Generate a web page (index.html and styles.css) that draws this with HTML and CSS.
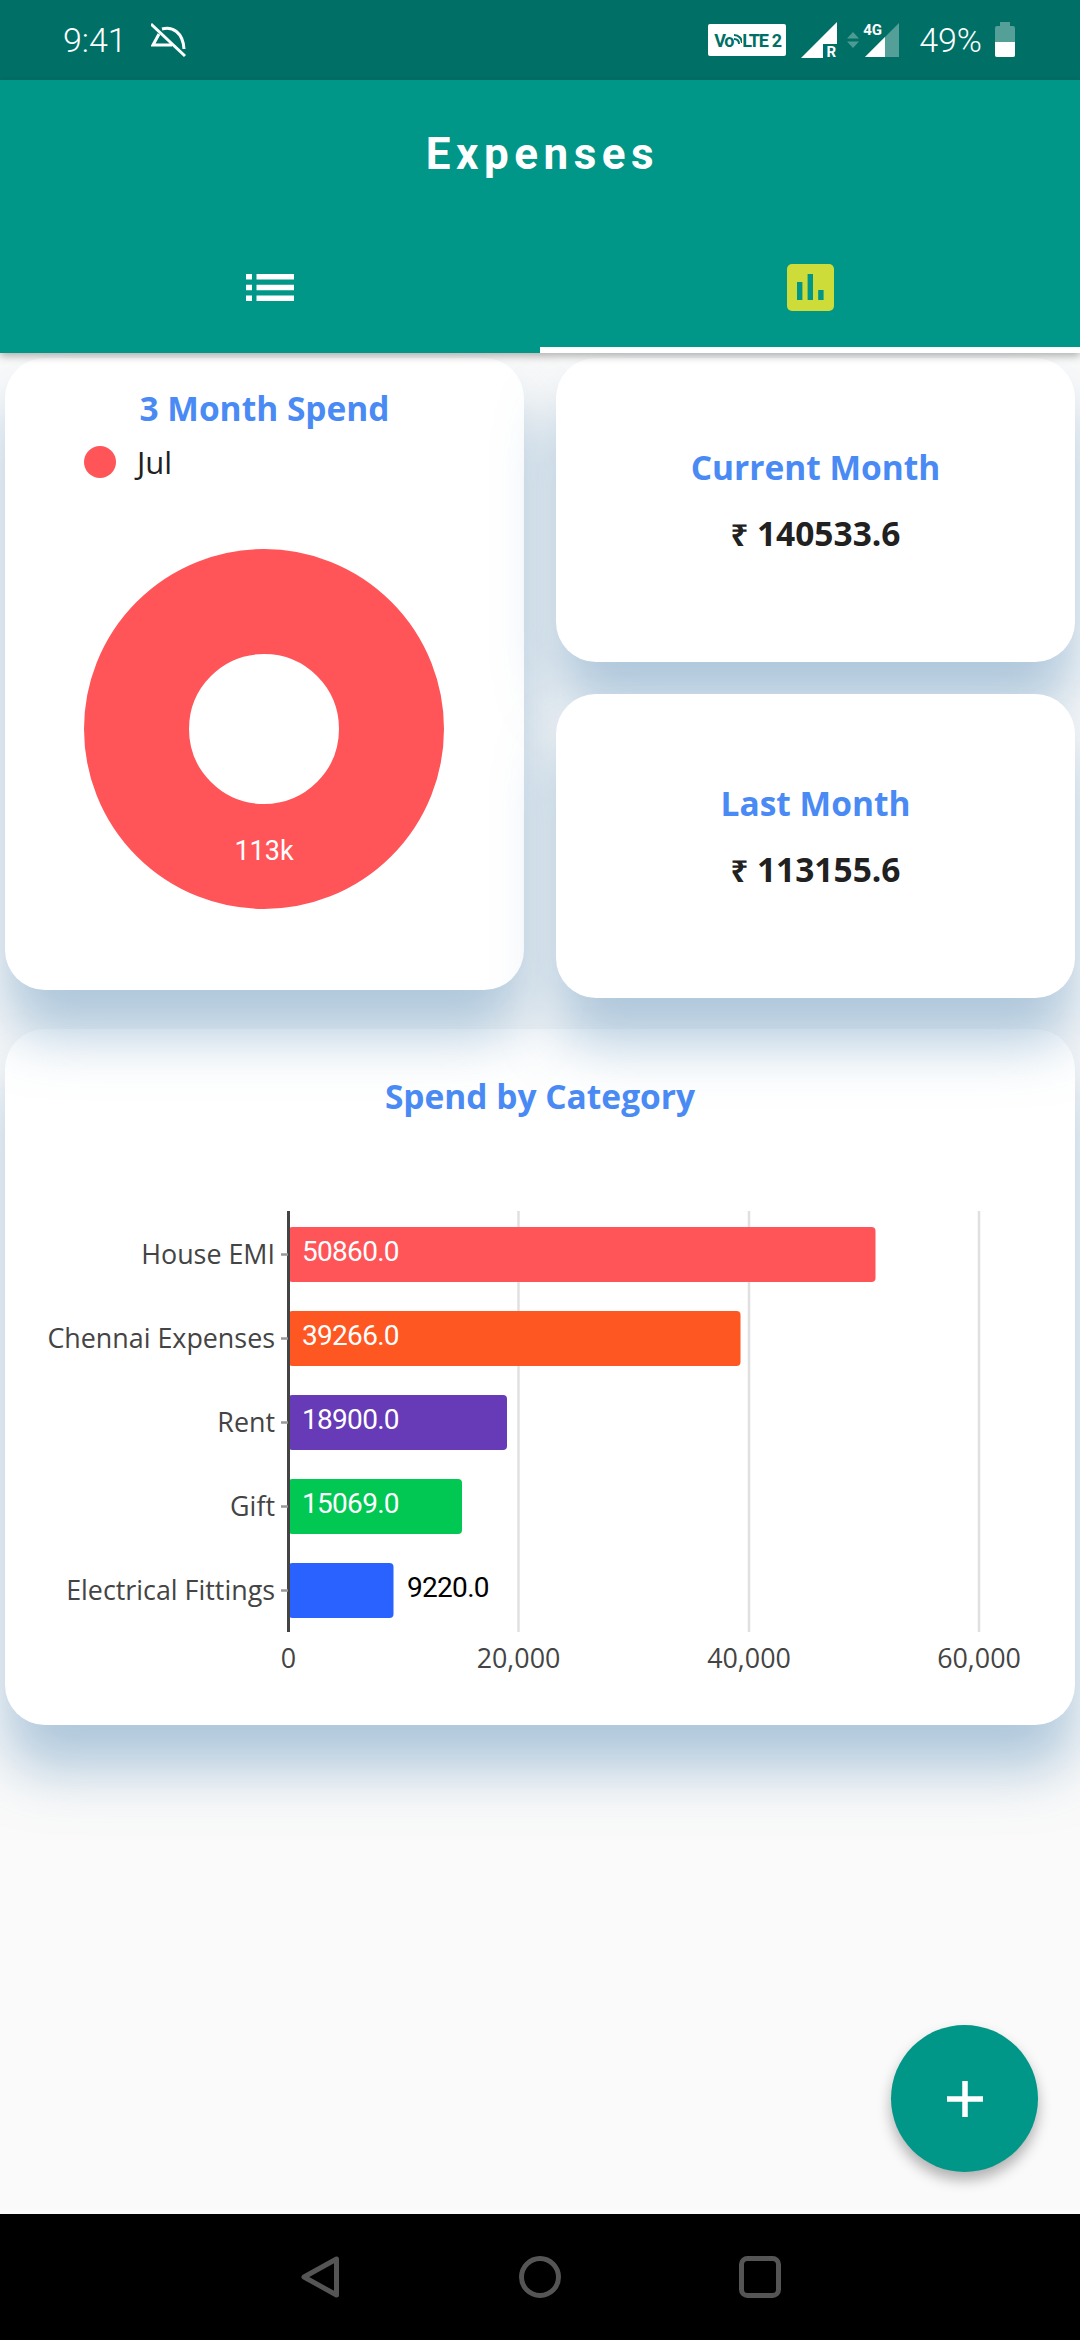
FILE: index.html
```html
<!DOCTYPE html>
<html lang="en">
<head>
<meta charset="UTF-8" />
<title>Expenses</title>
<link rel="stylesheet" href="styles.css">
</head>
<body>

<div class="statusbar">
	<div class="status-left">
		<span class="clock">9:41</span>
		<svg class="bell-off" width="36" height="36" viewBox="0 0 36 36">
			<path d="M21 23 L2 23 L8 12 M11 7 C21 4 32 10 33 27" fill="none" stroke="#fff" stroke-width="3"/>
			<path d="M0 2 L34 34" stroke="#fff" stroke-width="3"/>
		</svg>
	</div>
	<div class="status-right">
		<div class="volte">
			<span>Vo</span>
			<svg width="9" height="14" viewBox="0 0 9 14"><path d="M1 6 C4 6 6 8 6 11 M1 2 C6 2 9 6 9 10" fill="none" stroke="#007066" stroke-width="2"/></svg>
			<span>LTE</span>
			<span class="volte-sim">2</span>
		</div>
		<div class="signal">
			<svg width="36" height="36" viewBox="0 0 36 36"><path d="M0 36 L36 0 L36 22 L22 22 L22 36 Z" fill="#fff"/></svg>
			<span class="roam">R</span>
		</div>
		<svg class="updown" width="12" height="16" viewBox="0 0 12 16"><path d="M6 0 L12 6.500 L0 6.500 Z M0 9.500 L12 9.500 L6 16 Z" fill="#fff" opacity=".3"/></svg>
		<div class="signal signal-4g">
			<svg width="34" height="34" viewBox="0 0 34 34"><path d="M0 34 L34 0 L34 34 Z" fill="#fff" opacity=".33"/><path d="M0 34 L20 14 L20 34 Z" fill="#fff"/></svg>
			<span class="lte">4G</span>
		</div>
		<span class="percent">49%</span>
		<div class="battery"><div class="battery-fill"></div></div>
	</div>
</div>

<div class="appbar">
	<h1 class="apptitle">Expenses</h1>
	<div class="tabs">
		<div class="tab">
			<svg width="48" height="27" viewBox="0 0 48 27">
				<path d="M0 0h6v5.500h-6z M10.500 0h37.500v5.500h-37.500z M0 10.700h6v5.500h-6z M10.500 10.700h37.500v5.500h-37.500z M0 21.400h6v5.500h-6z M10.500 21.400h37.500v5.500h-37.500z" fill="#fff"/>
			</svg>
		</div>
		<div class="tab tab-active">
			<div class="chart-tile">
				<svg width="27" height="26" viewBox="0 0 27 26">
					<path d="M0 8h5.400v18h-5.400z M10.600 0h5.400v26h-5.400z M21.200 16h5.400v10h-5.400z" fill="#009688"/>
				</svg>
			</div>
		</div>
	</div>
</div>

<div class="content">
	<div class="cards-top">
		<div class="card card-donut">
			<h2 class="card-title">3 Month Spend</h2>
			<div class="legend"><span class="legend-dot"></span><span class="legend-label">Jul</span></div>
			<svg class="donut" width="360" height="360" viewBox="0 0 360 360">
				<circle cx="180" cy="180" r="127.500" fill="none" stroke="#ff5558" stroke-width="105"/>
				<text x="180" y="311" text-anchor="middle" class="donut-label">113k</text>
			</svg>
		</div>
		<div class="side-cards">
			<div class="card card-stat">
				<h2 class="card-title">Current Month</h2>
				<p class="stat-value"><span class="rupee">₹</span> 140533.6</p>
			</div>
			<div class="card card-stat">
				<h2 class="card-title">Last Month</h2>
				<p class="stat-value"><span class="rupee">₹</span> 113155.6</p>
			</div>
		</div>
	</div>

	<div class="card card-bars">
		<h2 class="card-title">Spend by Category</h2>
		<svg class="bars" width="1069" height="500" viewBox="0 0 1069 500">
			<g class="grid">
				<line x1="513.500" y1="0" x2="513.500" y2="421"/>
				<line x1="744" y1="0" x2="744" y2="421"/>
				<line x1="974" y1="0" x2="974" y2="421"/>
			</g>

			<rect class="bar" x="283.500" y="16" width="587" height="55" rx="4" fill="#ff5558"/>
			<rect class="bar" x="283.500" y="100" width="452" height="55" rx="4" fill="#ff5722"/>
			<rect class="bar" x="283.500" y="184" width="218.500" height="55" rx="4" fill="#673ab7"/>
			<rect class="bar" x="283.500" y="268" width="173.500" height="55" rx="4" fill="#00c853"/>
			<rect class="bar" x="283.500" y="352" width="105" height="55" rx="4" fill="#2962ff"/>

			<line class="axis" x1="283.500" y1="0" x2="283.500" y2="421"/>
			<g class="ticks">
				<line x1="276" y1="43.500" x2="283" y2="43.500"/>
				<line x1="276" y1="127.500" x2="283" y2="127.500"/>
				<line x1="276" y1="211.500" x2="283" y2="211.500"/>
				<line x1="276" y1="295.500" x2="283" y2="295.500"/>
				<line x1="276" y1="379.500" x2="283" y2="379.500"/>
			</g>

			<g class="cat-labels">
				<text x="270" y="53">House EMI</text>
				<text x="270" y="137">Chennai Expenses</text>
				<text x="270" y="221">Rent</text>
				<text x="270" y="305">Gift</text>
				<text x="270" y="389">Electrical Fittings</text>
			</g>

			<g class="bar-values">
				<text x="297" y="50">50860.0</text>
				<text x="297" y="134">39266.0</text>
				<text x="297" y="218">18900.0</text>
				<text x="297" y="302">15069.0</text>
				<text class="outside" x="402" y="386">9220.0</text>
			</g>

			<g class="x-labels">
				<text x="283.500" y="457">0</text>
				<text x="513.500" y="457">20,000</text>
				<text x="744" y="457">40,000</text>
				<text x="974" y="457">60,000</text>
			</g>
		</svg>
	</div>

	<div class="fab">
		<svg width="36" height="36" viewBox="0 0 36 36"><path d="M15.250 0h5.500v15.250h15.250v5.500h-15.250v15.250h-5.500v-15.250h-15.250v-5.500h15.250z" fill="#fff"/></svg>
	</div>
</div>

<div class="navbar">
	<svg width="42" height="42" viewBox="0 0 42 42"><path d="M37.500 3 L37.500 39 L5 21 Z" fill="none" stroke="#555" stroke-width="5" stroke-linejoin="round"/></svg>
	<svg width="42" height="42" viewBox="0 0 42 42"><circle cx="21" cy="21" r="18.500" fill="none" stroke="#555" stroke-width="5"/></svg>
	<svg width="42" height="42" viewBox="0 0 42 42"><rect x="2.500" y="2.500" width="37" height="37" rx="6" fill="none" stroke="#555" stroke-width="5"/></svg>
</div>

</body>
</html>
```

FILE: styles.css
```css
* {
	margin: 0;
	padding: 0;
	box-sizing: border-box;
}

html, body {
	width: 1080px;
	height: 2340px;
	overflow: hidden;
}

body {
	display: flex;
	flex-direction: column;
	background-color: #fafafa;
	font-family: "Open Sans", sans-serif;
}

/* status bar */

.statusbar {
	display: flex;
	justify-content: space-between;
	align-items: center;
	flex: none;
	height: 80px;
	padding: 0 65px 0 63px;
	background-color: #007066;
	color: #fff;
	font-family: Roboto, sans-serif;
}

.status-left, .status-right {
	display: flex;
	align-items: center;
}

.clock {
	font-size: 34px;
	font-weight: 300;
}

.bell-off {
	margin-left: 24px;
}

.volte {
	display: flex;
	align-items: center;
	width: 78px;
	height: 32px;
	padding-left: 6px;
	background-color: #fff;
	border-radius: 2px;
	color: #007066;
	font-size: 18px;
	font-weight: 700;
	letter-spacing: -1.200px;
}

.volte-sim {
	margin-left: 4px;
}

.signal {
	position: relative;
	height: 36px;
	margin-left: 15px;
}

.signal svg {
	display: block;
}

.roam {
	position: absolute;
	right: 1px;
	bottom: -1px;
	font-size: 15px;
	font-weight: 700;
	line-height: 14px;
}

.updown {
	margin-left: 10px;
}

.signal-4g {
	width: 34px;
	height: 34px;
	margin-left: 6px;
}

.lte {
	position: absolute;
	left: -2px;
	top: -1px;
	font-size: 15px;
	font-weight: 700;
	line-height: 16px;
}

.percent {
	margin-left: 20px;
	font-size: 34px;
	font-weight: 300;
}

.battery {
	position: relative;
	width: 20px;
	height: 31px;
	margin: 3px 0 0 13px;
	background-color: rgba(255, 255, 255, .33);
	border-radius: 2px;
}

.battery::before {
	content: "";
	position: absolute;
	left: 5px;
	top: -4px;
	width: 10px;
	height: 4px;
	background-color: rgba(255, 255, 255, .33);
}

.battery-fill {
	position: absolute;
	left: 0;
	right: 0;
	bottom: 0;
	height: 15px;
	background-color: #fff;
	border-radius: 0 0 2px 2px;
}

/* app bar */

.appbar {
	flex: none;
	height: 273px;
	background-color: #009688;
	box-shadow: 0 3px 8px rgba(0, 0, 0, .3);
	position: relative;
	z-index: 1;
}

.apptitle {
	padding: 43px 0 0 5px;
	color: #fff;
	font: 700 44px/62px Roboto, sans-serif;
	letter-spacing: 5.500px;
	text-align: center;
}

.tabs {
	display: flex;
	margin-top: 63px;
}

.tab {
	display: flex;
	justify-content: center;
	align-items: center;
	flex: 1;
	height: 105px;
	padding-bottom: 26px;
}

.tab-active {
	border-bottom: 6px solid #fff;
	padding-bottom: 20px;
}

.chart-tile {
	display: flex;
	justify-content: center;
	align-items: flex-end;
	width: 47px;
	height: 47px;
	padding-bottom: 11px;
	background-color: #cddc39;
	border-radius: 5px;
}

/* cards */

.content {
	position: relative;
	flex: 1;
	padding: 5px 5px 0;
}

.card {
	background-color: #fff;
	border-radius: 40px;
	box-shadow: 0 44px 55px rgba(100, 150, 190, .5);
	text-align: center;
}

.card-title {
	color: #4a8af4;
	font-size: 33.500px;
	font-weight: 700;
	line-height: 44px;
}

.cards-top {
	display: flex;
	align-items: flex-start;
	gap: 32px;
}

.card-donut {
	width: 519px;
	height: 632px;
	padding-top: 28px;
}

.legend {
	display: flex;
	align-items: center;
	height: 44px;
	margin-top: 10px;
	padding-left: 79px;
}

.legend-dot {
	width: 32px;
	height: 32px;
	background-color: #ff5558;
	border-radius: 50%;
}

.legend-label {
	margin-left: 21px;
	color: #212121;
	font-size: 31px;
}

.donut {
	display: block;
	margin: 65px 0 0 79px;
}

.donut-label {
	fill: #fff;
	font: 27px Roboto, sans-serif;
}

.side-cards {
	display: flex;
	flex-direction: column;
	gap: 32px;
	width: 519px;
}

.card-stat {
	height: 304px;
	padding-top: 87px;
}

.stat-value {
	margin-top: 22px;
	color: #212121;
	font-size: 33.500px;
	font-weight: 700;
	line-height: 44px;
}

.rupee {
	font-family: "Noto Sans", sans-serif;
	font-size: 31px;
}

.card-bars {
	height: 696px;
	margin-top: 31px;
	padding-top: 45px;
}

.bars {
	display: block;
	margin-top: 93px;
}

.grid line {
	stroke: #e0e0e0;
	stroke-width: 2.500;
}

.axis {
	stroke: #444;
	stroke-width: 3;
}

.ticks line {
	stroke: #999;
	stroke-width: 2.500;
}

.cat-labels text {
	fill: #444;
	font-size: 26.850px;
	text-anchor: end;
}

.bar-values text {
	fill: #fff;
	font: 28px Roboto, sans-serif;
	letter-spacing: -.7px;
}

.bar-values .outside {
	fill: #000;
}

.x-labels text {
	fill: #444;
	font-size: 26.850px;
	text-anchor: middle;
}

.fab {
	position: absolute;
	right: 42px;
	top: 1672px;
	display: flex;
	justify-content: center;
	align-items: center;
	width: 147px;
	height: 147px;
	background-color: #009688;
	border-radius: 50%;
	box-shadow: 0 8px 14px rgba(0, 0, 0, .3);
}

/* nav bar */

.navbar {
	display: flex;
	justify-content: center;
	gap: 178px;
	flex: none;
	height: 126px;
	padding-top: 42px;
	background-color: #000;
}
```
